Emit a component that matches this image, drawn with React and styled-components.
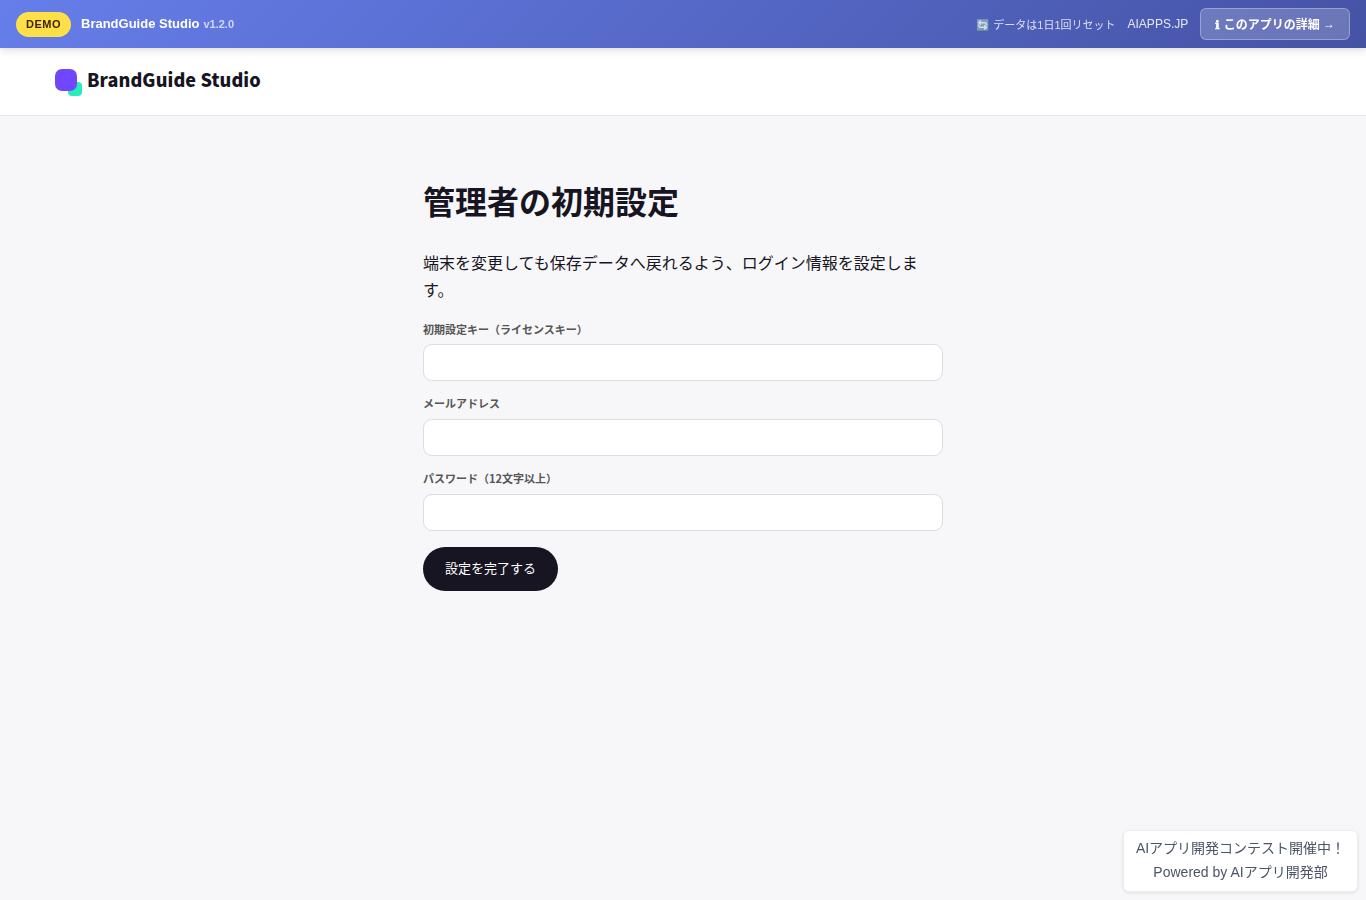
import React, { useState } from "react";
import styled, { createGlobalStyle } from "styled-components";

const GlobalStyle = createGlobalStyle`
  * {
    box-sizing: border-box;
  }

  body {
    margin: 0;
    background: #f7f7fa;
    color: #181522;
    font-family: "Noto Sans CJK JP", sans-serif;
    line-height: 1.7;
  }
`;

const fields = [
  { name: "licenseKey", label: "初期設定キー（ライセンスキー）", type: "text" },
  { name: "email", label: "メールアドレス", type: "email" },
  { name: "password", label: "パスワード（12文字以上）", type: "password" },
];

// デモバー
const DemoBar = styled.div`
  position: sticky;
  top: 0;
  z-index: 10;
  will-change: transform;
  display: flex;
  align-items: center;
  justify-content: space-between;
  height: 48px;
  padding: 0 16px;
  color: #fff;
  background: linear-gradient(135deg, #667eea 0%, #4553a5 100%);
  box-shadow: 0 2px 8px rgba(0, 0, 0, 0.15);
  font-family: "Liberation Sans", "Noto Sans CJK JP", sans-serif;
  font-size: 13px;
  line-height: 1.5;
`;

const BarGroup = styled.div`
  display: flex;
  align-items: center;
  gap: ${props => props.$gap}px;
`;

const DemoBadge = styled.span`
  padding: 4px 10px;
  border-radius: 20px;
  background: #fde047;
  color: #422006;
  font-size: 11px;
  font-weight: 700;
  letter-spacing: 0.5px;
  line-height: 17px;
`;

const AppName = styled.span`
  font-weight: 600;
`;

const Version = styled.span`
  margin-left: 4px;
  font-size: 11px;
  opacity: 0.7;
`;

const ResetNote = styled.span`
  padding-top: 1.5px;
  font-size: 11px;
  opacity: 0.8;
`;

const SiteLink = styled.a`
  color: rgba(255, 255, 255, 0.85);
  font-size: 12px;
  text-decoration: none;
`;

const DetailLink = styled.a`
  display: flex;
  align-items: center;
  height: 32px;
  padding: 1px 14px 0;
  border: 1px solid rgba(255, 255, 255, 0.3);
  border-radius: 6px;
  background: rgba(255, 255, 255, 0.2);
  color: #fff;
  font-size: 12px;
  font-weight: 600;
  text-decoration: none;
  white-space: pre;
`;

const InfoMark = styled.span`
  width: 5.1px;
  font-family: "DejaVu Sans", sans-serif;
  font-weight: 700;
  -webkit-text-stroke: 0.5px #fff;
`;

const Arrow = styled.span`
  margin-bottom: 2px;
`;

// ヘッダー
const Header = styled.header`
  display: flex;
  align-items: center;
  height: 68px;
  padding: 0 55px;
  background: #fff;
  border-bottom: 1px solid #e7e7ec;
`;

const Brand = styled.a`
  position: relative;
  z-index: 0;
  display: flex;
  align-items: center;
  gap: 10px;
  padding-bottom: 3px;
  color: #181522;
  text-decoration: none;
`;

const BrandName = styled.span`
  padding-bottom: 2px;
  font-size: 18px;
  font-weight: 800;
  letter-spacing: 0.1px;
  line-height: 30px;
`;

const BrandMark = styled.span`
  position: relative;
  width: 22px;
  height: 22px;
  border-radius: 7px;
  background: #7047ff;

  &::after {
    content: "";
    position: absolute;
    z-index: -1;
    right: -5px;
    bottom: -5px;
    width: 14px;
    height: 14px;
    border-radius: 4px;
    background: #27edbb;
  }
`;

const Main = styled.main`
  width: 520px;
  margin: 0 auto;
  padding-top: 57px;
`;

const Title = styled.h1`
  margin: 0 0 21.44px;
  font-size: 32px;
  font-weight: 700;
`;

const Lead = styled.p`
  margin: 0 0 16.5px;
  font-size: 16px;
`;

const Form = styled.form`
  display: flex;
  flex-direction: column;
  align-items: flex-start;
`;

const Field = styled.label`
  display: grid;
  gap: 5.7px;
  width: 100%;
  margin-bottom: 13.4px;
  color: #555;
  font-size: 11px;
  font-weight: 700;
`;

const Input = styled.input`
  width: 100%;
  height: 37px;
  padding: 0 11px;
  border: 1px solid #dcdce2;
  border-radius: 9px;
  background: #fff;
  color: #181522;
  font: inherit;
  font-size: 13px;
`;

const SubmitButton = styled.button`
  height: 44px;
  margin-top: 2.8px;
  padding: 0 22px 2px;
  border: 0;
  border-radius: 22px;
  background: #181522;
  color: #fff;
  font-family: inherit;
  font-size: 13px;
  cursor: pointer;
`;

// 右下のお知らせ
const ContestBadge = styled.div`
  position: fixed;
  right: 8px;
  bottom: 8px;
  z-index: 10;
  will-change: transform;
  width: 235px;
  padding: 5px 11px 7px;
  border: 1px solid #edeef1;
  border-radius: 6px;
  background: #fff;
  box-shadow: 0 1px 3px rgba(0, 0, 0, 0.1);
  color: #4a5568;
  font-family: "Liberation Sans", "Noto Sans CJK JP", sans-serif;
  font-size: 14px;
  line-height: 24px;
  text-align: center;
  white-space: nowrap;
`;

const App = () => {
  const [values, setValues] = useState({ licenseKey: "", email: "", password: "" });

  const handleChange = e => {
    setValues({ ...values, [e.target.name]: e.target.value });
  };

  return (
    <>
      <GlobalStyle />
      <DemoBar>
        <BarGroup $gap={10}>
          <DemoBadge>DEMO</DemoBadge>
          <AppName>
            BrandGuide Studio<Version>v1.2.0</Version>
          </AppName>
        </BarGroup>
        <BarGroup $gap={12}>
          <ResetNote>🔄 データは1日1回リセット</ResetNote>
          <SiteLink href="#">AIAPPS.JP</SiteLink>
          <DetailLink href="#">
            <InfoMark>ℹ</InfoMark> このアプリの詳細 <Arrow>→</Arrow>
          </DetailLink>
        </BarGroup>
      </DemoBar>

      <Header>
        <Brand href="#">
          <BrandMark />
          <BrandName>BrandGuide Studio</BrandName>
        </Brand>
      </Header>

      <Main>
        <Title>管理者の初期設定</Title>
        <Lead>端末を変更しても保存データへ戻れるよう、ログイン情報を設定します。</Lead>
        <Form onSubmit={e => e.preventDefault()}>
          {fields.map(field => (
            <Field key={field.name}>
              {field.label}
              <Input
                name={field.name}
                type={field.type}
                value={values[field.name]}
                onChange={handleChange}
              />
            </Field>
          ))}
          <SubmitButton type="submit">設定を完了する</SubmitButton>
        </Form>
      </Main>

      <ContestBadge>
        <div>AIアプリ開発コンテスト開催中！</div>
        <div>Powered by AIアプリ開発部</div>
      </ContestBadge>
    </>
  );
};

export default App;
